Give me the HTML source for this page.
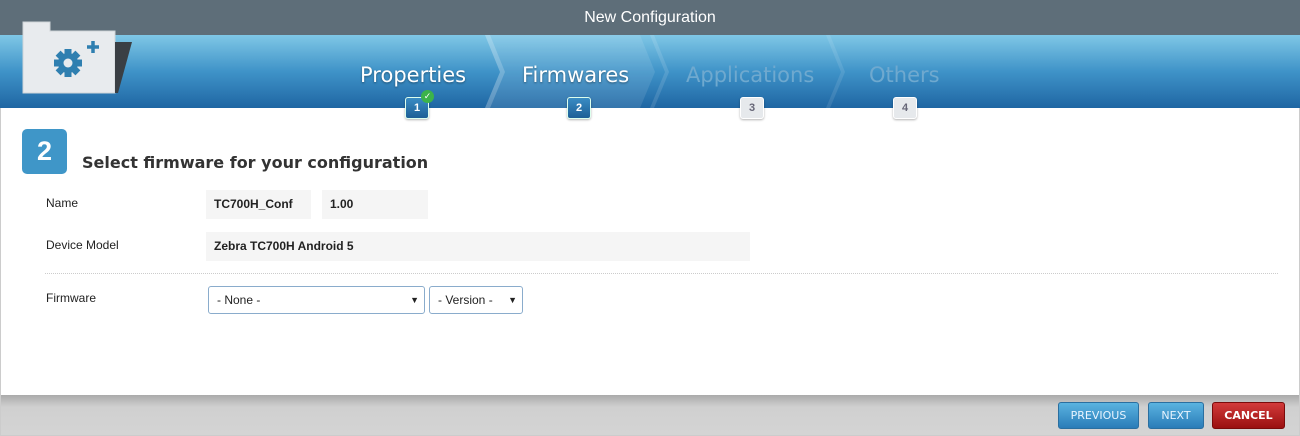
<!DOCTYPE html><html><head><style>
body{margin:0;width:1300px;height:436px;overflow:hidden;font-family:"Liberation Sans","DejaVu Sans",sans-serif;background:#fff;position:relative}
.a{position:absolute}
.title{left:0;top:0;width:1300px;height:35px;background:#5e6e79;color:#fff;font-size:16px;text-align:center;line-height:36px}
.band{left:0;top:35px;width:1300px;height:73px;background:linear-gradient(#7fc7e6,#3f93c8 50%,#1f66a3)}
.step{top:63px;font-size:21px;font-family:"DejaVu Sans",sans-serif;color:#fff;text-shadow:0 1px 2px rgba(0,0,0,.4)}
.dim{color:#6fa9cf;text-shadow:none}
.num{width:22px;height:20px;border-radius:3px;font-size:11px;font-weight:bold;text-align:center;line-height:20px;top:97px;box-shadow:0 1px 2px rgba(0,0,0,.3)}
.on{background:linear-gradient(#3a8cc4,#1d5f96);color:#fff;border:1px solid #dfe;}
.off{background:#e6e9ec;color:#667;border:1px solid #fff}
.lbl{font-size:12px;color:#222;left:46px}
.box{background:#f5f5f5;font-size:12px;font-weight:bold;color:#222;line-height:29px;padding-left:8px;box-sizing:border-box;height:29px}
.sel{border:1px solid #8aaccc;border-radius:3px;height:28px;box-sizing:border-box;font-size:12px;color:#222;line-height:26px;padding-left:8px}
.foot{left:1px;top:395px;width:1298px;height:40px;background:linear-gradient(#aaa,#d0d0d0 30%,#d4d4d4)}
.btn{top:402px;height:25px;border-radius:3px;color:#fff;font-size:11px;text-align:center;line-height:25px;font-family:"DejaVu Sans",sans-serif}
.b{background:linear-gradient(#5ab3e0,#2a7cb8);border:1px solid #2a6fa0;color:#e8f4ff}
</style></head><body>
<div class="a" style="left:0;top:0;width:1298px;height:434px;border:1px solid #ccc"></div>
<div class="a title">New Configuration</div>
<div class="a band"></div>
<svg class="a" style="left:0;top:35px" width="1300" height="73">
<polygon points="485,0 640,0 655,37 640,73 485,73 500,37" fill="rgba(255,255,255,.1)"/>
<polygon points="485,0 490,0 505,37 490,73 485,73 500,37" fill="rgba(255,255,255,.2)"/>
<polygon points="650,0 654,0 669,37 654,73 650,73 665,37" fill="rgba(255,255,255,.12)"/>
<polygon points="826,0 830,0 845,37 830,73 826,73 841,37" fill="rgba(255,255,255,.1)"/>
</svg>
<svg class="a" style="left:20px;top:18px" width="115" height="80">
<path d="M3 4h27v9h65v62H3z" fill="#e8ebee" stroke="#cfd4d8"/>
<polygon points="95,24 112,24 98,75 95,75" fill="#3a3f44"/>
<g transform="translate(48,45)" fill="#2f7fb0"><circle r="10"/>
<rect x="-3.5" y="-14" width="7" height="28"/><rect x="-14" y="-3.5" width="28" height="7"/><rect x="-3.5" y="-14" width="7" height="28" transform="rotate(45)"/><rect x="-3.5" y="-14" width="7" height="28" transform="rotate(-45)"/>
<circle r="4.5" fill="#e8ebee"/></g>
<path d="M67 29h12M73 23v12" stroke="#2f7fb0" stroke-width="3.5"/>
</svg>
<div class="a step" style="left:360px">Properties</div>
<div class="a step" style="left:522px">Firmwares</div>
<div class="a step dim" style="left:686px">Applications</div>
<div class="a step dim" style="left:869px">Others</div>
<div class="a num on" style="left:405px">1</div>
<div class="a" style="left:421px;top:90px;width:13px;height:13px;border-radius:50%;background:#3cb34a;color:#fff;font-size:9px;text-align:center;line-height:13px">✓</div>
<div class="a num on" style="left:567px">2</div>
<div class="a num off" style="left:740px">3</div>
<div class="a num off" style="left:893px">4</div>
<div class="a" style="left:22px;top:129px;width:45px;height:45px;border-radius:5px;background:#3f96c8;color:#fff;font-size:27px;font-weight:bold;text-align:center;line-height:45px">2</div>
<div class="a" style="left:82px;top:153px;font-size:16px;font-weight:bold;color:#333;font-family:'DejaVu Sans',sans-serif">Select firmware for your configuration</div>
<div class="a lbl" style="top:196px">Name</div>
<div class="a box" style="left:206px;top:190px;width:105px">TC700H_Conf</div>
<div class="a box" style="left:322px;top:190px;width:106px">1.00</div>
<div class="a lbl" style="top:238px">Device Model</div>
<div class="a box" style="left:206px;top:232px;width:544px">Zebra TC700H Android 5</div>
<div class="a" style="left:45px;top:273px;width:1233px;border-top:1px dotted #ccc"></div>
<div class="a lbl" style="top:291px">Firmware</div>
<div class="a sel" style="left:208px;top:286px;width:217px">- None -<span style="position:absolute;right:5px;font-size:9px">▼</span></div>
<div class="a sel" style="left:429px;top:286px;width:94px">- Version -<span style="position:absolute;right:5px;font-size:9px">▼</span></div>
<div class="a foot"></div>
<div class="a btn b" style="left:1058px;width:79px">PREVIOUS</div>
<div class="a btn b" style="left:1148px;width:54px">NEXT</div>
<div class="a btn" style="left:1212px;width:71px;background:linear-gradient(#d23a3a,#9a1010);border:1px solid #7a0a0a;font-weight:bold">CANCEL</div>
</body></html>
